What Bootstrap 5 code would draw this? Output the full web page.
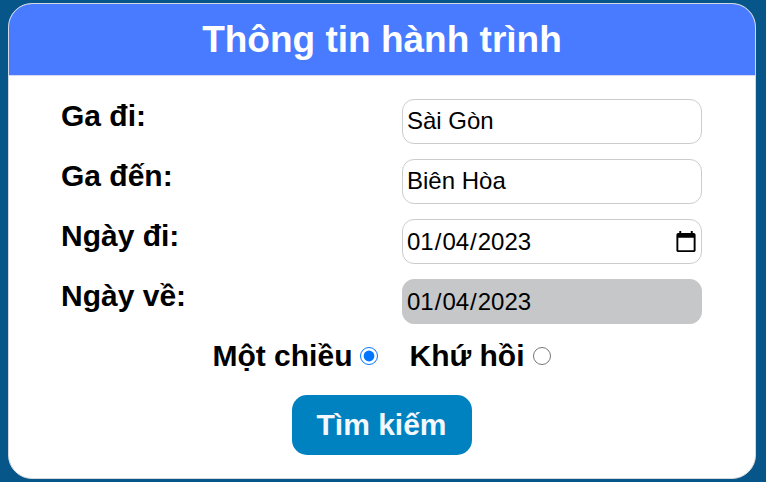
<!DOCTYPE html>
<html lang="vi">
<head>
<meta charset="utf-8">
<meta name="viewport" content="width=device-width, initial-scale=1">
<title>Thông tin hành trình</title>
<link href="https://cdn.jsdelivr.net/npm/bootstrap@5.3.0/dist/css/bootstrap.min.css" rel="stylesheet">
<style>
body { background: #065689; font-family: "Liberation Sans", Arial, sans-serif; color: #000; }
.trip-wrap { padding: 3px 10px 3px 8px; }
.trip-card { border: 1px solid #d5d9de; border-radius: 24px; overflow: hidden; color: #000; }
.trip-head { background: #487bff; border-bottom: 1px solid #d5d9ee; border-radius: 0; padding: 12px 16px; }
.trip-title { font-size: 37px; line-height: 47px; }
.trip-body { padding: 23px 53px 23px 52px; }
.trip-row { margin-bottom: 15px; }
.trip-label { font-size: 30px; line-height: 34px; font-weight: 700; }
.trip-input { width: 300px; height: 45px; padding: 1px 4px 3px; border: 1px solid #ccc; border-radius: 12px; background: #fff; color: #000; font-size: 24px; }
.trip-input[type="date"] { padding: 1px 1px 1px 3px; }
.trip-input::-webkit-datetime-edit-month-field,
.trip-input::-webkit-datetime-edit-day-field,
.trip-input::-webkit-datetime-edit-year-field { padding: 0 1px; }
.trip-input:disabled { background: #c6c7c9; border-color: #c6c7c9; color: #000; opacity: 1; }
.trip-input:disabled::-webkit-calendar-picker-indicator { visibility: hidden; }
.trip-options { gap: 31px; margin-bottom: 22px; }
.trip-radio { width: 18px; height: 18px; margin: 0; accent-color: #0075ff; }
.trip-btn { width: 180px; height: 60px; border-radius: 15px; background: #0082c1; color: #f4f8fc; font-size: 30px; line-height: 34px; }
.trip-btn:hover { background: #0072aa; color: #fff; }
</style>
</head>
<body>
<main class="trip-wrap">
  <form class="card trip-card">
    <div class="card-header trip-head text-center text-white">
      <h1 class="trip-title fw-bold m-0">Thông tin hành trình</h1>
    </div>
    <div class="card-body trip-body">
      <div class="trip-row d-flex justify-content-between">
        <label class="trip-label" for="from">Ga đi:</label>
        <input class="trip-input" type="text" id="from" value="Sài Gòn">
      </div>
      <div class="trip-row d-flex justify-content-between">
        <label class="trip-label" for="to">Ga đến:</label>
        <input class="trip-input" type="text" id="to" value="Biên Hòa">
      </div>
      <div class="trip-row d-flex justify-content-between">
        <label class="trip-label" for="depart">Ngày đi:</label>
        <input class="trip-input" type="date" id="depart" value="2023-01-04">
      </div>
      <div class="trip-row d-flex justify-content-between">
        <label class="trip-label" for="return">Ngày về:</label>
        <input class="trip-input" type="date" id="return" value="2023-01-04" disabled>
      </div>
      <div class="trip-options d-flex justify-content-center">
        <div class="d-flex align-items-center gap-2">
          <label class="trip-label" for="oneway">Một chiều</label>
          <input class="trip-radio" type="radio" name="kind" id="oneway" checked>
        </div>
        <div class="d-flex align-items-center gap-2">
          <label class="trip-label" for="round">Khứ hồi</label>
          <input class="trip-radio" type="radio" name="kind" id="round">
        </div>
      </div>
      <div class="text-center">
        <button class="btn trip-btn fw-bold" type="submit">Tìm kiếm</button>
      </div>
    </div>
  </form>
</main>
<script src="https://cdn.jsdelivr.net/npm/bootstrap@5.3.0/dist/js/bootstrap.bundle.min.js"></script>
</body>
</html>
